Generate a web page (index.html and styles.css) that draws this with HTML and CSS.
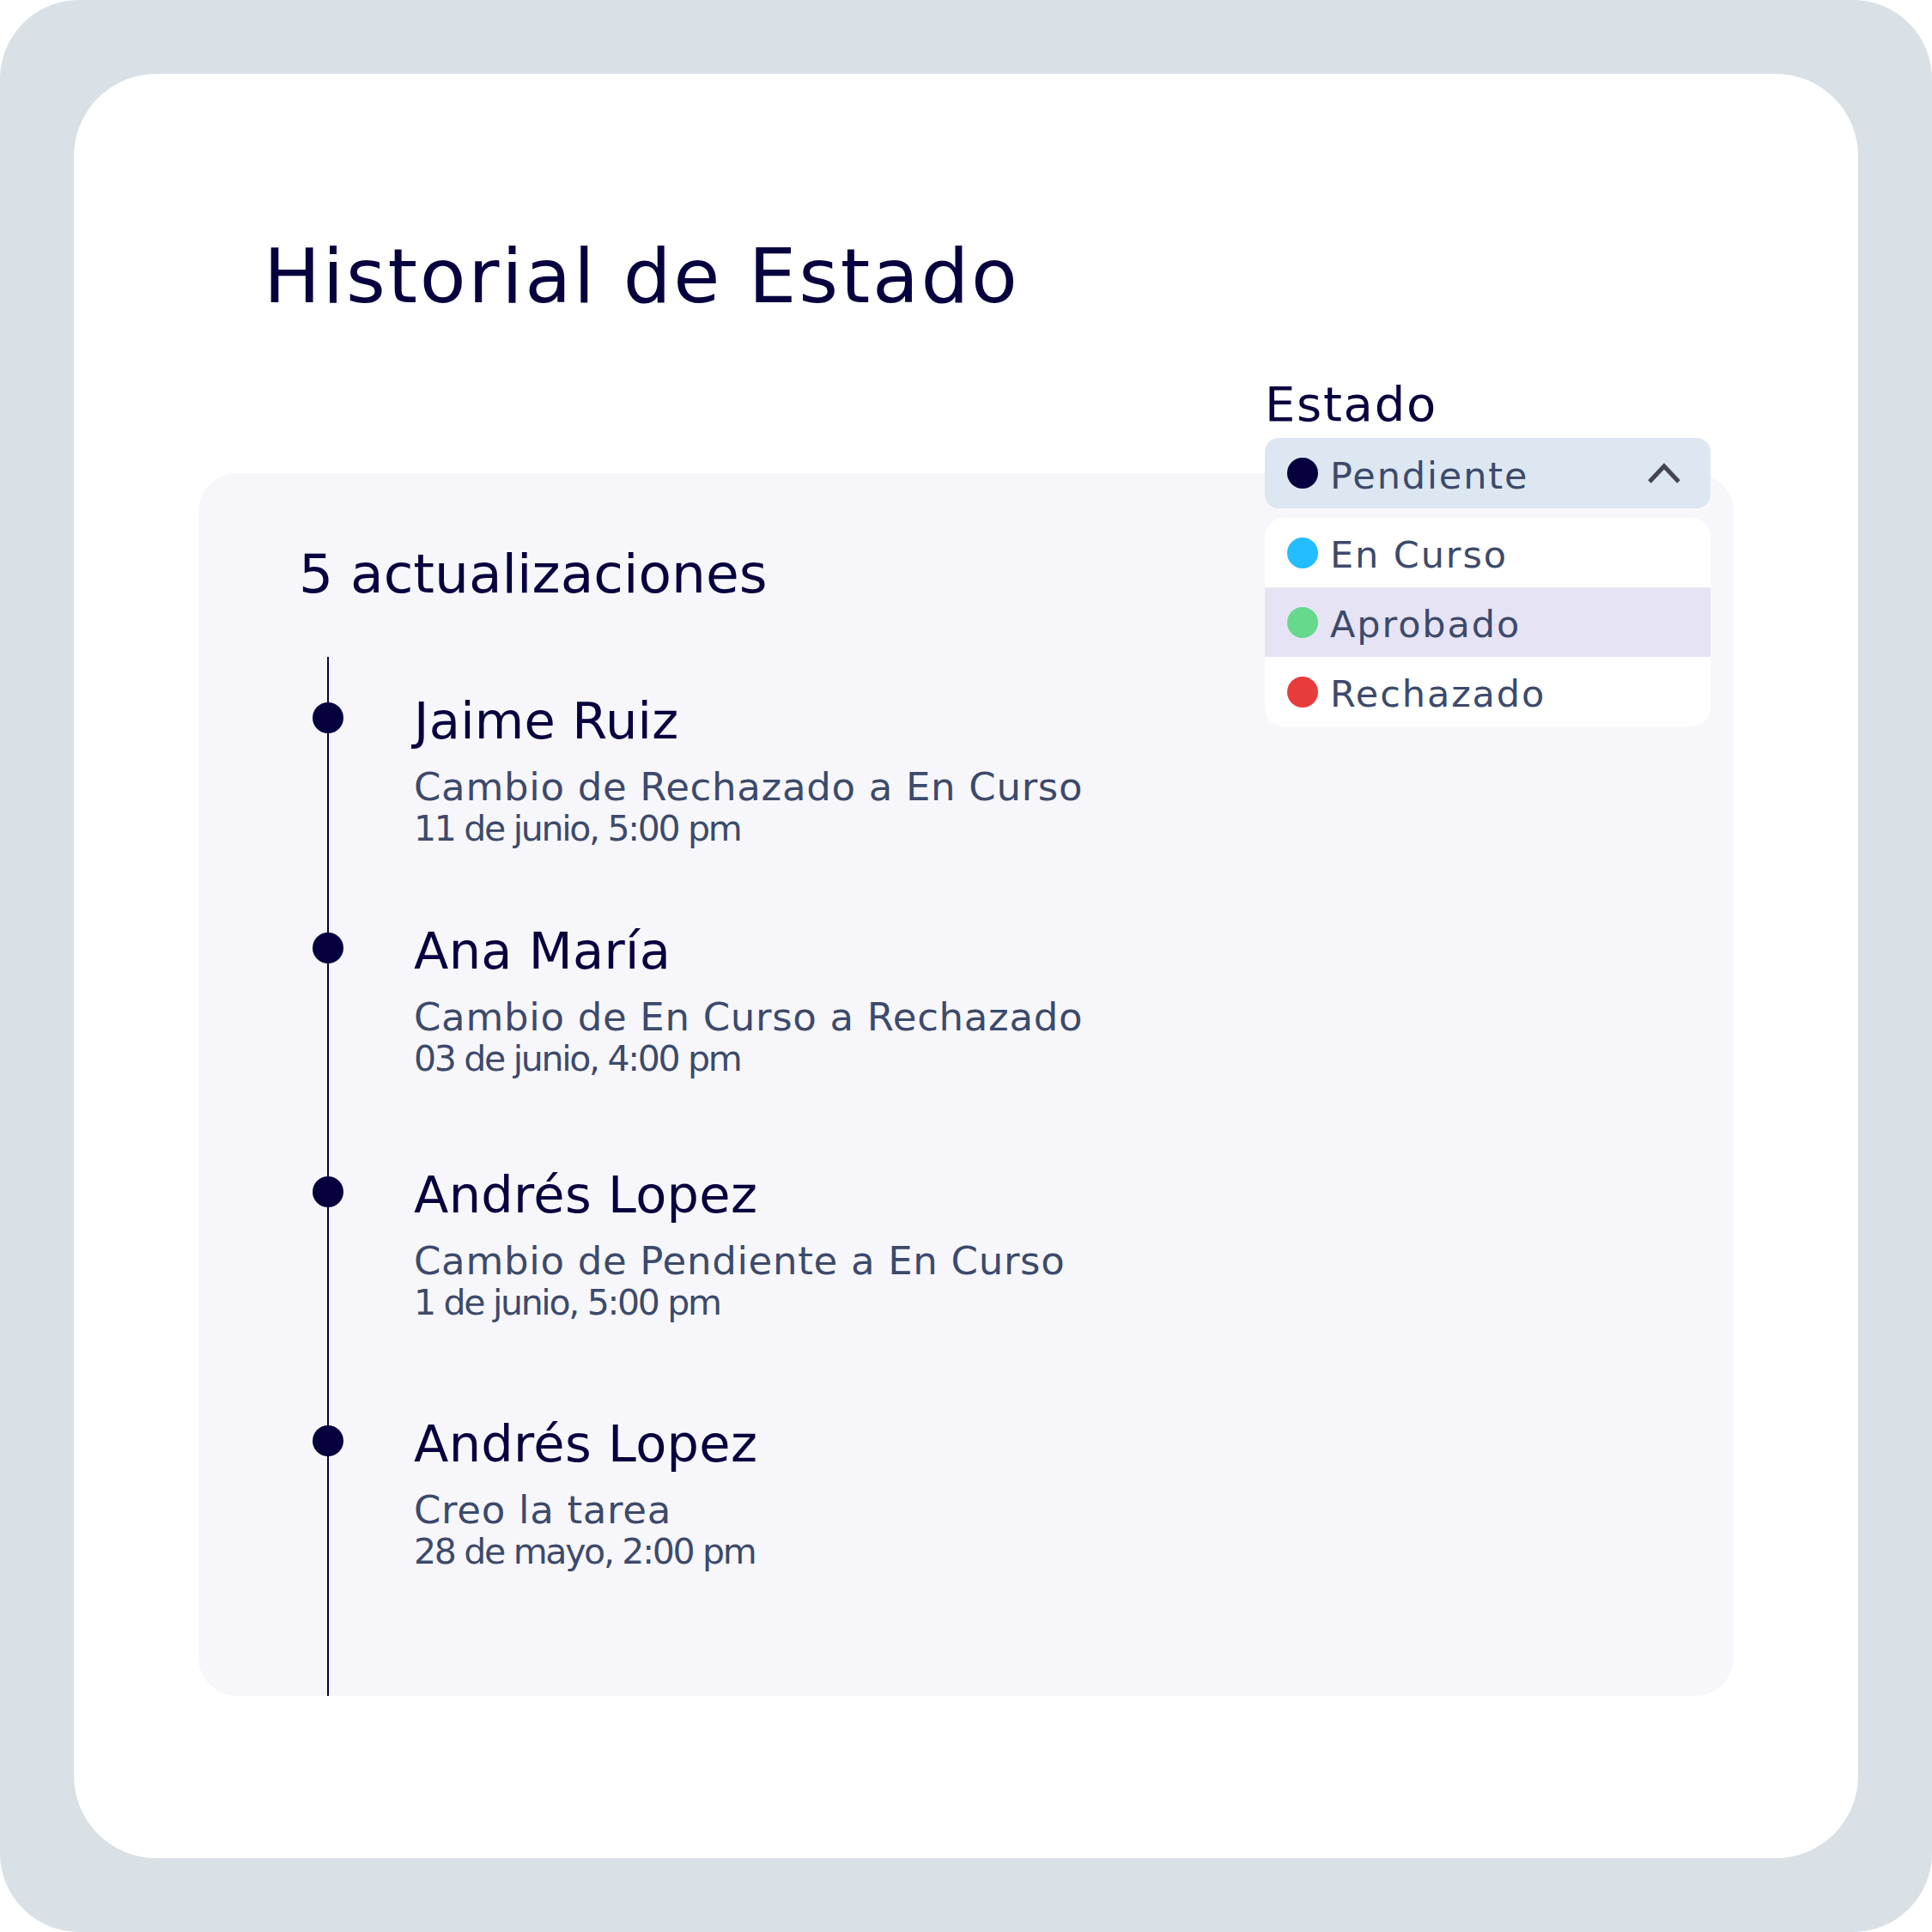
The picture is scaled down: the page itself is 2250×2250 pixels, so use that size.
FILE: index.html
```html
<!DOCTYPE html>
<html lang="es">
<head>
    <meta charset="UTF-8">
    <meta name="viewport" content="width=device-width, initial-scale=1.0">
    <title>Historial de Estado</title>
    <link rel="stylesheet" href="styles.css">
</head>
<body>
    <div class="frame">
        <div class="card">
            <h1 class="title">Historial de Estado</h1>

            <section class="panel">
                <h2 class="count">5 actualizaciones</h2>
                <div class="timeline">
                    <div class="event">
                        <span class="dot"></span>
                        <div class="name">Jaime Ruiz</div>
                        <div class="change">Cambio de Rechazado a En Curso</div>
                        <div class="date">11 de junio, 5:00 pm</div>
                    </div>
                    <div class="event">
                        <span class="dot"></span>
                        <div class="name">Ana María</div>
                        <div class="change">Cambio de En Curso a Rechazado</div>
                        <div class="date">03 de junio, 4:00 pm</div>
                    </div>
                    <div class="event">
                        <span class="dot"></span>
                        <div class="name">Andrés Lopez</div>
                        <div class="change">Cambio de Pendiente a En Curso</div>
                        <div class="date">1 de junio, 5:00 pm</div>
                    </div>
                    <div class="event">
                        <span class="dot"></span>
                        <div class="name">Andrés Lopez</div>
                        <div class="change">Creo la tarea</div>
                        <div class="date">28 de mayo, 2:00 pm</div>
                    </div>
                </div>
            </section>

            <div class="status">
                <div class="status-label">Estado</div>
                <div class="select">
                    <span class="option-dot pending"></span>
                    <span class="option-text">Pendiente</span>
                    <svg class="chevron" viewBox="0 0 40 26">
                        <polyline points="3,23 20,5 37,23" fill="none" stroke="#45454f" stroke-width="5"/>
                    </svg>
                </div>
                <div class="options">
                    <div class="option">
                        <span class="option-dot running"></span>
                        <span class="option-text">En Curso</span>
                    </div>
                    <div class="option active">
                        <span class="option-dot approved"></span>
                        <span class="option-text">Aprobado</span>
                    </div>
                    <div class="option">
                        <span class="option-dot rejected"></span>
                        <span class="option-text">Rechazado</span>
                    </div>
                </div>
            </div>
        </div>
    </div>
</body>
</html>
```

FILE: styles.css
```css
body { margin: 0; background: #fff; font-family: "DejaVu Sans", sans-serif; }

.frame { width: 2250px; height: 2250px; box-sizing: border-box; padding: 86px; background: #d9e0e6; border-radius: 92px; }
.card { position: relative; height: 100%; box-sizing: border-box; padding: 192px 145px 189px; background: #fff; border-radius: 96px; display: flex; flex-direction: column; }
.title { margin: 0 0 0 76px; font-size: 88px; line-height: 88px; font-weight: normal; letter-spacing: 2.7px; color: #07003f; }

.panel { flex: 1; margin-top: 185px; padding: 80px 0 0 117px; background: #f7f7fb; border-radius: 45px; display: flex; flex-direction: column; }
.count { margin: 0; font-size: 63px; line-height: 76px; font-weight: normal; color: #07003f; }

.timeline { flex: 1; margin: 58px 0 0 33px; padding-top: 40px; border-left: 2px solid #07003f; }
.event { position: relative; padding-left: 99px; }
.event:nth-child(2) { margin-top: 85px; }
.event:nth-child(3) { margin-top: 101px; }
.event:nth-child(4) { margin-top: 107px; }
.dot { position: absolute; left: -19px; top: 13px; width: 36px; height: 36px; border-radius: 50%; background: #07003f; }
.name { margin-bottom: 17px; font-size: 59px; line-height: 70px; letter-spacing: 0.3px; color: #07003f; }
.change { font-size: 45px; line-height: 50px; letter-spacing: 0.7px; color: #3d4a6b; }
.date { font-size: 41px; line-height: 46px; letter-spacing: -2.3px; color: #3d4a6b; }

.status { position: absolute; left: 1387px; top: 352px; width: 519px; }
.status-label { margin-bottom: 6px; font-size: 56px; line-height: 66px; letter-spacing: 1.7px; color: #07003f; }
.select { height: 82px; box-sizing: border-box; padding: 0 34px 0 26px; display: flex; align-items: center; background: #dce7f1; border-radius: 16px; }
.chevron { width: 40px; height: 26px; flex: none; }
.options { margin-top: 11px; background: #fff; border-radius: 22px; overflow: hidden; }
.option { height: 81px; padding-left: 26px; display: flex; align-items: center; }
.option.active { background: #e6e4f4; }
.option-dot { width: 36px; height: 36px; margin-right: 14px; flex: none; border-radius: 50%; }
.option-text { flex: 1; padding-top: 6px; font-size: 43px; line-height: 43px; letter-spacing: 1.9px; color: #3d4a6b; }

.pending { background: #07003f; }
.running { background: #22bdff; }
.approved { background: #66d98c; }
.rejected { background: #e83c3c; }
```
